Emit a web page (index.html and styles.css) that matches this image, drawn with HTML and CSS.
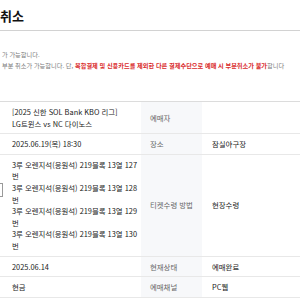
FILE: index.html
```html
<!DOCTYPE html>
<html lang="ko">
<head>
<meta charset="utf-8">
<link rel="stylesheet" href="styles.css">
</head>
<body>
<div class="page">
  <h1 class="title">취소</h1>
  <div class="notice">
    <p class="line">가 가능합니다.</p>
    <p class="line">부분 취소가 가능합니다. 단, <b class="red">복합결제 및 신용카드를 제외한 다른 결제수단으로 예매 시 부분취소가 불가</b>합니다</p>
  </div>
  <div class="table">
    <div class="td"><div class="in">[2025 신한 SOL Bank KBO 리그]<br>LG트윈스 vs NC 다이노스</div></div>
    <div class="th">예매자</div>
    <div class="td2"></div>

    <div class="td"><div class="in">2025.06.19(목) 18:30</div></div>
    <div class="th">장소</div>
    <div class="td2">잠실야구장</div>

    <div class="td">
      <div class="seatrow">
        <span class="chk"></span>
        <div class="seats">
          <div>3루 오렌지석(응원석) 219블록 13열 127<wbr>번</div>
          <div>3루 오렌지석(응원석) 219블록 13열 128<wbr>번</div>
          <div>3루 오렌지석(응원석) 219블록 13열 129<wbr>번</div>
          <div>3루 오렌지석(응원석) 219블록 13열 130<wbr>번</div>
        </div>
      </div>
    </div>
    <div class="th">티켓수령 방법</div>
    <div class="td2">현장수령</div>

    <div class="td"><div class="in">2025.06.14</div></div>
    <div class="th">현재상태</div>
    <div class="td2">예매완료</div>

    <div class="td"><div class="in">현금</div></div>
    <div class="th">예매채널</div>
    <div class="td2">PC웹</div>
  </div>
</div>
</body>
</html>
```
FILE: styles.css
```css
html, body {
  margin: 0;
  padding: 0;
  background: #fff;
  overflow: hidden;
}
body {
  width: 300px;
  height: 300px;
  font-family: "Noto Sans CJK KR", "Noto Sans", sans-serif;
  color: #222;
}
.page {
  width: 300px;
}
.title {
  margin: 0;
  padding: 8px 0 6px;
  font-size: 13px;
  line-height: 16px;
  font-weight: 700;
  color: #111;
  white-space: nowrap;
  border-bottom: 1px solid #d2d2d2;
}
.notice {
  margin-top: 18px;
  padding-left: 2px;
}
.line {
  margin: 0;
  font-size: 6.2px;
  line-height: 11px;
  color: #7a7a7a;
  white-space: nowrap;
}
.red {
  color: #d92b2b;
  font-weight: 700;
}
.table {
  margin-top: 30px;
  margin-left: -12px;
  width: 312px;
  display: grid;
  grid-template-columns: 153px 61px 1fr;
  border-top: 1px solid #dcdcdc;
  font-size: 7.4px;
  line-height: 11.6px;
}
.th, .td, .td2 {
  border-bottom: 1px solid #e8e8e8;
  padding: 4px 0;
}
.td {
  color: #222;
}
.in {
  padding-left: 24px;
}
.seatrow {
  display: flex;
  gap: 9px;
}
.chk {
  flex: none;
  width: 14px;
  height: 14px;
  margin-left: 1px;
  margin-top: 24px;
  border: 1px solid #9a9a9a;
  box-sizing: border-box;
  background: #fff;
}
.seats {
  flex: 1;
  min-width: 0;
}
.th {
  background: #f7f8fa;
  color: #666;
  padding-left: 9px;
  display: flex;
  align-items: center;
}
.td2 {
  padding-left: 10px;
  color: #222;
  display: flex;
  align-items: center;
}
```
